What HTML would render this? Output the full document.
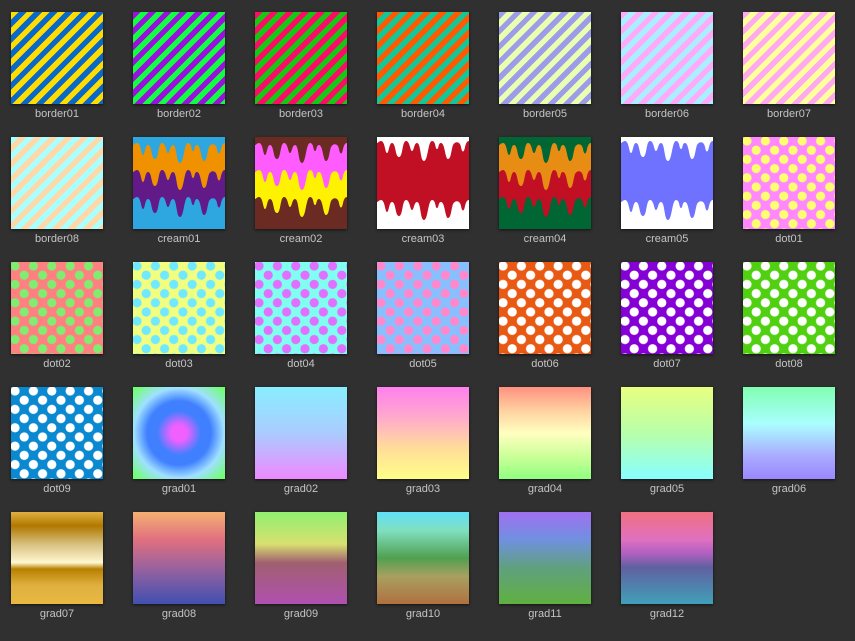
<!DOCTYPE html>
<html><head><meta charset="utf-8"><style>
body{margin:0;background:#303030;width:855px;height:641px;overflow:hidden;font-family:"Liberation Sans",sans-serif}
.t{position:absolute;width:92px;height:92px;box-shadow:0 1px 3px rgba(0,0,0,.6);overflow:hidden}
.l{position:absolute;width:122px;text-align:center;color:#c4c4c4;font-size:11px}
.t svg{display:block}
</style></head><body>
<svg width="0" height="0" style="position:absolute"><defs>
<path id="d" d="M0 -100 H92 V6 C90 6 89 8 88 12 C87 18 85 18 84 12 C83 6 78 6 76 10 C74 16 74 24 71 24 C68 24 68 8 64 8 C61 8 62 14 60 14 C58 14 59 6 55 6 C51 6 51 26 47 26 C43 26 44 8 40 8 C37 8 37 16 35 16 C33 16 33 6 29 6 C25 6 26 22 22 22 C18 22 19 8 15 8 C12 8 12 18 10 18 C8 18 8 6 4 6 C2 6 1 8 0 8 Z"/>
</defs></svg>
<div id="g"></div>
<script>
const S=(a,b)=>`repeating-linear-gradient(135deg,${a} 0 5.5px,${b} 5.5px 11px)`;
const D=(bg,c)=>`radial-gradient(circle,${c} 4.3px,transparent 4.8px) 4px 4px/18.4px 18.4px,radial-gradient(circle,${c} 4.3px,transparent 4.8px) 13.2px 13.2px/18.4px 18.4px,${bg}`;
const L=(...s)=>`linear-gradient(to bottom,${s.join(',')})`;
const C=(bg,layers)=>`<svg width="92" height="92" viewBox="0 0 92 92"><rect width="92" height="92" fill="${bg}"/>${layers.map(([c,o])=>`<use href="#d" fill="${c}" transform="translate(0 ${o})"/>`).join('')}</svg>`;
const items=[
["border01",S('#ffdd00','#0a68c8')],["border02",S('#9a10dd','#10ff40')],["border03",S('#ff0a66','#14c814')],["border04",S('#ff5a00','#12c898')],["border05",S('#9c9ce8','#eaffb0')],["border06",S('#ffaaf8','#aaeeff')],["border07",S('#ffaaee','#ffff9c')],
["border08",S('#aaffff','#ffd8aa')],["cream01",null,C('#2ea6e0',[['#621a88',54],['#f09200',27],['#2ea6e0',0]])],["cream02",null,C('#6b2a22',[['#fff200',54],['#ff5cff',27],['#6b2a22',0]])],["cream03",null,C('#ffffff',[['#c10f24',57],['#ffffff',-2]])],["cream04",null,C('#006633',[['#c10f24',54],['#e88d14',27],['#006633',0]])],["cream05",null,C('#ffffff',[['#6e72ff',57],['#ffffff',-2]])],["dot01",D('#ff88ff','#ffff70')],
["dot02",D('#ff8080','#80ec70')],["dot03",D('#f0ff80','#70e8ff')],["dot04",D('#80fff0','#e070ff')],["dot05",D('#88c0ff','#ff88cc')],["dot06",D('#e85a14','#fff')],["dot07",D('#8400d4','#fff')],["dot08",D('#50d010','#fff')],
["dot09",D('#0a88d0','#fff')],["grad01","radial-gradient(circle at 50% 50%,#f060ff 0,#f060ff 8px,#4080ff 22px,#4080ff 32px,#a0e0ff 45px,#70ff70 62px)"],["grad02",L('#88eeff','#aaccff','#ee88ff')],["grad03",L('#ff80ee','#ffaacc','#ffdd99','#ffff88')],["grad04",L('#ff9080','#ffd0a0','#ffffc0 50%','#ccff99','#90ff80')],["grad05",L('#e8ff80','#b8ffaa','#88ffff')],["grad06",L('#80ffb0','#aaffff 40%','#aaaaff 75%','#9a88ff')],
["grad07",L('#e0b040','#b07800 15%','#d8c080 35%','#fff8d0 55%','#b88000 62%','#e0b040 80%','#e8b840')],["grad08",L('#f4b070','#e07080 30%','#9060a0 65%','#4050b0')],["grad09",L('#90f070','#d8e070 35%','#a06070 55%','#b050b0')],["grad10",L('#60e0f8','#80e0c0 20%','#50a050 50%','#a8a060 70%','#b07040')],["grad11",L('#a070f0','#7090e0 30%','#60a080 60%','#60b040')],["grad12",L('#f07080','#e070c0 30%','#b060c0 45%','#6060a0 60%','#40a0b8')]
];
let h='';
items.forEach((it,i)=>{const c=i%7,r=Math.floor(i/7);const x=11+c*122,y=12+r*125;
h+=`<div class="t" style="left:${x}px;top:${y}px;${it[1]?'background:'+it[1]:''}">${it[2]||''}</div><div class="l" style="left:${x-15}px;top:${y+96}px">${it[0]}</div>`;});
document.getElementById('g').innerHTML=h;
</script>
</body></html>
